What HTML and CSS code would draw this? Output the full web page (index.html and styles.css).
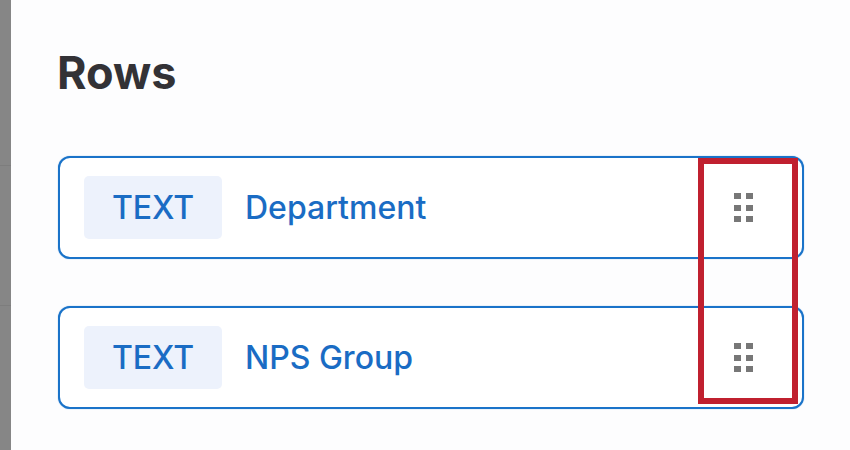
FILE: index.html
```html
<!DOCTYPE html>
<html lang="en">
<head>
  <meta charset="UTF-8" />
  <title>Rows</title>
  <link rel="stylesheet" href="styles.css">
</head>
<body>

  <div class="backdrop">
    <div class="backdrop-line line-one"></div>
    <div class="backdrop-line line-two"></div>
  </div>

  <div class="panel">
    <h2>Rows</h2>

    <div class="row-list">
      <div class="row-card">
        <span class="tag">TEXT</span>
        <span class="row-name">Department</span>
        <svg class="grip" width="19" height="30" viewBox="0 0 19 30">
          <rect x="0" y="0" width="7" height="6"/><rect x="12" y="0" width="7" height="6"/>
          <rect x="0" y="12" width="7" height="6"/><rect x="12" y="12" width="7" height="6"/>
          <rect x="0" y="23" width="7" height="6"/><rect x="12" y="23" width="7" height="6"/>
        </svg>
      </div>

      <div class="row-card">
        <span class="tag">TEXT</span>
        <span class="row-name">NPS Group</span>
        <svg class="grip" width="19" height="30" viewBox="0 0 19 30">
          <rect x="0" y="0" width="7" height="6"/><rect x="12" y="0" width="7" height="6"/>
          <rect x="0" y="12" width="7" height="6"/><rect x="12" y="12" width="7" height="6"/>
          <rect x="0" y="23" width="7" height="6"/><rect x="12" y="23" width="7" height="6"/>
        </svg>
      </div>
    </div>

    <!-- annotation drawn over the drag handles -->
    <div class="highlight"></div>
  </div>

</body>
</html>
```

FILE: styles.css
```css
* { box-sizing: border-box; }

body {
  margin: 0;
  width: 850px;
  height: 450px;
  overflow: hidden;
  display: flex;
  font-family: 'Inter', 'Liberation Sans', sans-serif;
  background: #fff;
}

.backdrop {
  width: 11px;
  flex-shrink: 0;
  background: #868686;
  position: relative;
}

.backdrop-line {
  position: absolute;
  left: 0;
  right: 0;
  height: 1px;
  background: #7d7d7d;
}

.line-one { top: 165px; }
.line-two { top: 305px; }

.panel {
  flex: 1;
  position: relative;
  padding: 47px 46px 0 47px;
  background: #fdfdfe;
}

h2 {
  margin: 0 0 57px -1px;
  font-size: 45px;
  line-height: 52px;
  font-weight: 700;
  color: #333236;
}

.row-list {
  display: flex;
  flex-direction: column;
  gap: 47px;
}

.row-card {
  height: 103px;
  display: flex;
  align-items: center;
  padding: 0 49px 0 24px;
  background: #fff;
  border: 2px solid #1a73c9;
  border-radius: 12px;
  box-shadow: 0 0 1px rgba(26, 115, 201, 0.7);
}

.tag {
  width: 138px;
  height: 63px;
  display: flex;
  align-items: center;
  justify-content: center;
  margin-right: 23px;
  background: #edf2fc;
  border-radius: 5px;
  font-size: 32px;
  font-weight: 500;
  color: #1a6cc4;
}

.row-name {
  flex: 1;
  font-size: 32px;
  font-weight: 500;
  color: #1a6cc4;
}

.grip { fill: #777; }

.highlight {
  position: absolute;
  left: 687px;
  top: 158px;
  width: 100px;
  height: 246px;
  border: 6px solid #c0202f;
}
```
